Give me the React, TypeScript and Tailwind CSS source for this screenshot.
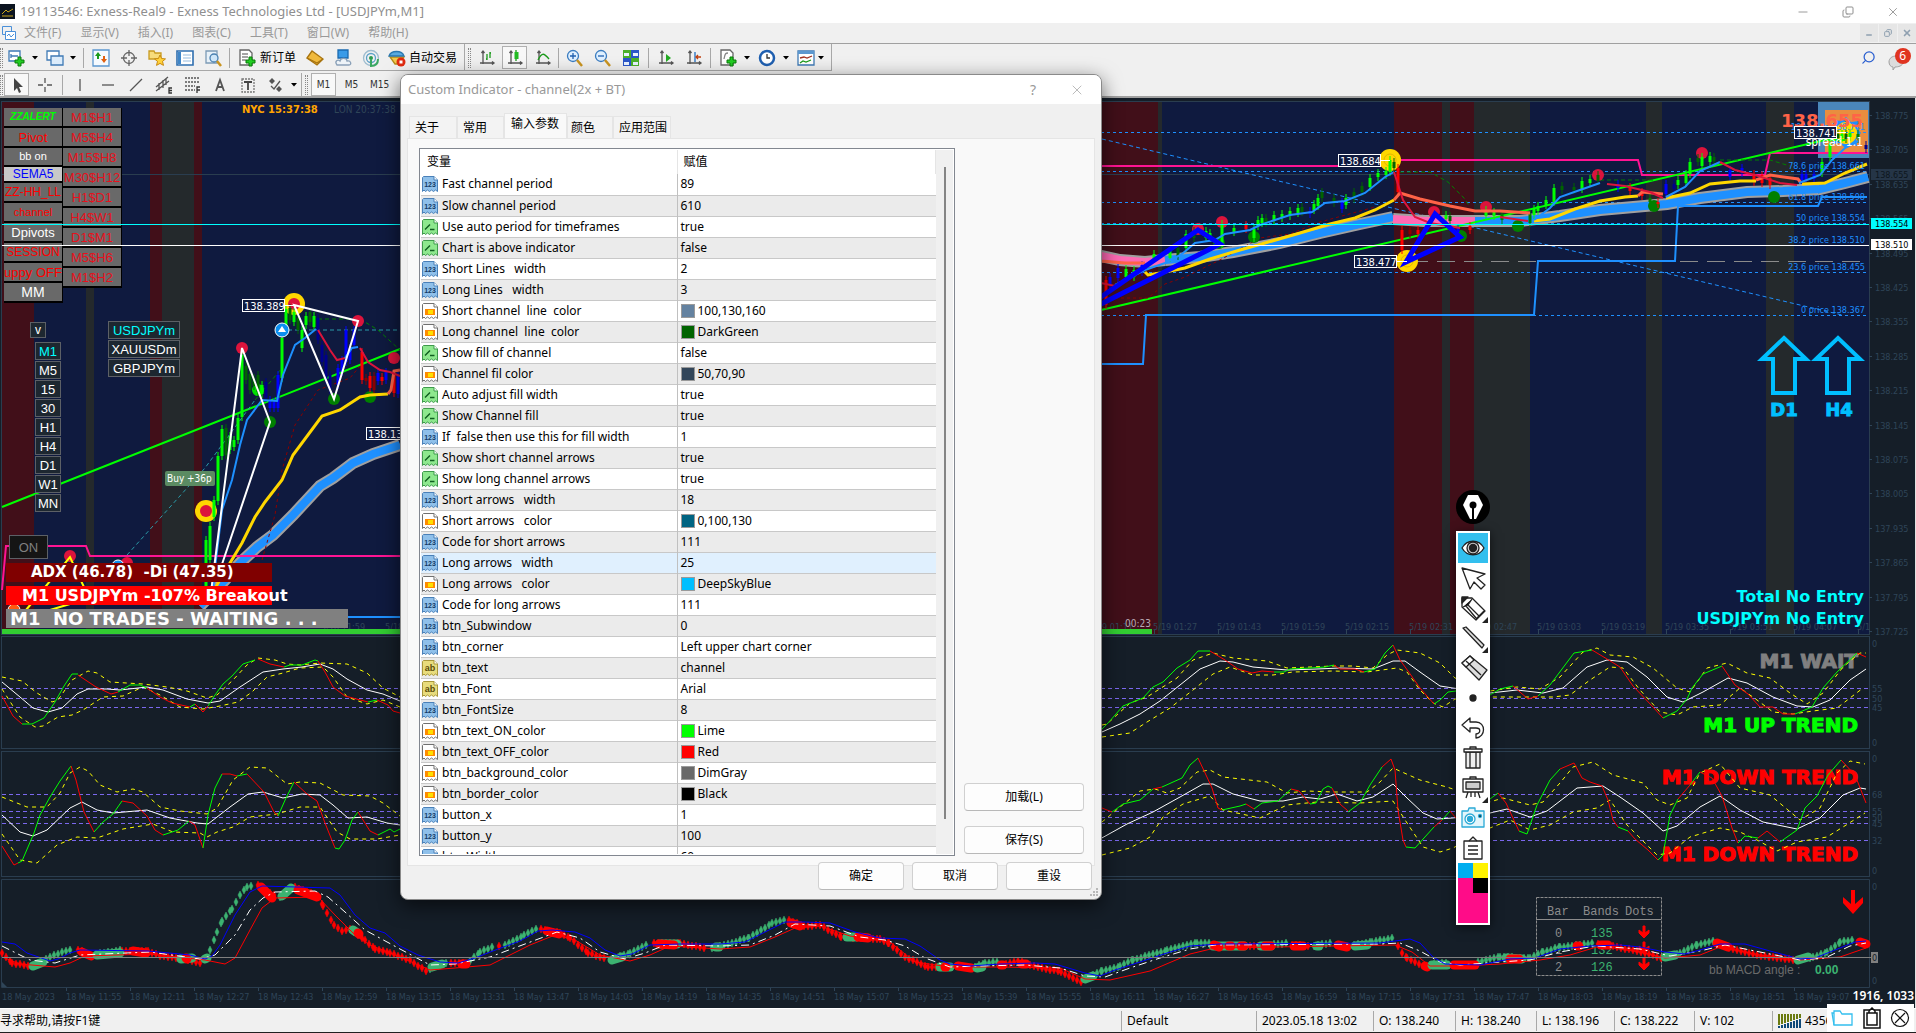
import React from 'react';
import { Search, Minus, X, Copy } from 'lucide-react';

const LIME = '#00ff00';
const RED = '#ff0000';
const BLUE = '#1e90ff';
const SEA = '#3cb371';
const GOLD = '#ffd700';
const CRIMSON = '#dc143c';
const TOMATO = '#ff6347';
const PINK = '#ff1493';
const FRAME = '#2a3d4f';
const DIM = '#2f4558';

const TAHOMA = '"DejaVu Sans Condensed", "DejaVu Sans", sans-serif';
const HEAVY = '"DejaVu Sans", sans-serif';

type Line = [string, string];

/* ---------- main chart data ---------- */

const bands: [number, number, string][] = [
  [2, 34, 'r'], [34, 86, 'n'], [86, 94, 'g'], [94, 150, 'n'], [150, 162, 'r'], [162, 194, 'g'],
  [194, 202, 'r'], [202, 1050, 'n'], [1050, 1158, 'r'], [1158, 1162, 'g'], [1162, 1394, 'n'],
  [1394, 1442, 'r'], [1442, 1450, 'g'], [1450, 1474, 'r'], [1474, 1530, 'g'], [1530, 1646, 'n'],
  [1646, 1662, 'g'], [1662, 1766, 'n'], [1766, 1794, 'g'], [1794, 1869, 'n'],
];
const bandFill: Record<string, string> = { r: '#410f19', n: '#0f1a3f', g: '#24292c' };

const thickBands: Line[] = [
  [BLUE, '200,606 225,580 240,563 257,547 273,535 293,515 320,486 333,478 353,463 373,454 400,445'],
  ['#ff69b4', '1080,252 1101,256 1120,260 1145,262 1165,260'],
  [BLUE, '1165,260 1200,257 1233,252 1280,243 1320,233 1360,224 1393,217'],
  ['#ff69b4', '1393,219 1425,221 1475,221'],
  [BLUE, '1475,221 1520,221 1560,216 1600,210 1667,204 1700,198 1747,192 1783,191 1820,189 1845,183 1868,177'],
];

const averages: Line[] = [
  [GOLD, '208,600 230,563 242,543 255,517 265,502 282,480 293,455 322,416 340,410 360,397 370,395 388,394'],
  [TOMATO, '388,394 391,390 394,371 400,370'],
  [TOMATO, '1090,259 1101,261 1125,263 1145,263'],
  [GOLD, '1145,272 1148,275 1160,273 1185,268 1210,259 1240,250 1265,243 1300,233 1330,224 1355,218 1375,210 1394,200'],
  [TOMATO, '1394,200 1400,193 1420,199 1450,206 1475,211 1500,211 1530,213'],
  [GOLD, '1534,221 1550,219 1575,209 1600,201 1625,197 1638,196'],
  [TOMATO, '1638,196 1642,192 1663,194'],
  [GOLD, '1666,198 1690,193 1710,184 1740,181 1756,181'],
  [TOMATO, '1756,180 1770,175 1798,179 1801,183'],
  [GOLD, '1802,184 1825,183 1845,173 1867,164'],
];

const fastAverages: Line[] = [
  [BLUE, '212,600 216,560 222,510 232,480 240,445 247,420 262,400 277,401 283,375 295,345 305,338 316,329'],
  [CRIMSON, '318,330 330,350 337,360 345,358'],
  [BLUE, '345,358 352,348 358,347'],
  [CRIMSON, '360,348 368,362 380,370 390,372 400,376'],
  [CRIMSON, '1101,283 1115,286'],
  [BLUE, '1115,285 1145,270 1165,263 1182,254 1195,243 1215,240 1225,234 1250,230 1260,225 1290,215 1312,212 1325,203 1345,201 1365,193 1385,177 1394,172'],
  [CRIMSON, '1394,172 1403,200 1415,217 1430,223 1460,228'],
  [CRIMSON, '1500,217 1528,221'],
  [BLUE, '1534,220 1550,208 1560,197 1580,190 1600,183'],
  [CRIMSON, '1607,184 1625,186 1650,192 1663,198'],
  [BLUE, '1666,197 1685,187 1700,171 1720,162'],
  [CRIMSON, '1720,162 1735,170 1755,175 1780,183 1797,185'],
  [BLUE, '1799,183 1820,175 1832,160 1845,148 1858,141'],
];

// x, top, bottom, colour
const candles: [number, number, number, string][] = [
  [206, 540, 600, LIME], [210, 526, 560, LIME], [214, 500, 517, LIME], [218, 456, 501, LIME], [222, 429, 456, LIME],
  [226, 428, 455, '#006400'], [230, 436, 450, LIME], [234, 440, 447, LIME], [238, 418, 440, LIME], [242, 355, 417, LIME],
  [246, 366, 380, '#006400'], [250, 374, 390, '#006400'], [254, 378, 386, '#006400'], [258, 375, 392, '#006400'],
  [262, 385, 394, LIME], [266, 382, 398, '#00008b'], [270, 400, 408, '#0000ff'], [274, 402, 408, '#0000ff'],
  [278, 375, 408, '#0000ff'], [282, 338, 378, LIME], [286, 309, 328, LIME], [290, 308, 320, '#006400'], [294, 312, 322, LIME],
  [298, 318, 330, '#006400'], [302, 330, 348, LIME], [306, 316, 325, LIME], [310, 312, 322, '#006400'], [314, 316, 327, LIME],
  [318, 318, 340, '#00008b'], [322, 345, 362, '#00008b'], [326, 355, 380, '#00008b'], [330, 375, 390, '#00008b'],
  [338, 368, 385, '#0000ff'], [342, 360, 372, '#0000ff'], [346, 330, 362, '#0000ff'], [350, 348, 360, '#0000ff'],
  [354, 330, 345, '#0000ff'], [362, 352, 380, RED], [366, 378, 381, '#8b0000'], [370, 376, 388, RED], [374, 376, 390, '#8b0000'],
  [378, 373, 381, '#0000ff'], [382, 377, 381, RED], [386, 372, 380, '#0000ff'], [394, 375, 393, RED], [398, 376, 394, '#0000ff'],
  [1106, 280, 305, RED], [1110, 277, 285, '#0000ff'], [1118, 268, 278, '#0000ff'], [1126, 269, 277, LIME], [1134, 270, 277, LIME],
  [1142, 265, 272, '#0000ff'], [1154, 254, 259, LIME], [1170, 251, 258, LIME], [1178, 248, 256, '#006400'], [1186, 234, 248, LIME],
  [1194, 231, 238, '#006400'], [1206, 231, 238, LIME], [1210, 233, 238, LIME], [1222, 224, 244, LIME], [1234, 228, 232, LIME],
  [1246, 225, 229, RED], [1254, 229, 238, LIME], [1258, 220, 226, LIME], [1262, 218, 223, LIME], [1266, 218, 223, '#006400'],
  [1274, 215, 221, LIME], [1282, 214, 218, LIME], [1290, 211, 216, LIME], [1298, 208, 213, LIME], [1302, 207, 212, '#006400'],
  [1310, 211, 214, '#0000ff'], [1314, 204, 210, LIME], [1318, 198, 206, LIME], [1322, 192, 198, '#006400'], [1334, 198, 203, '#006400'],
  [1342, 202, 209, '#0000ff'], [1346, 198, 205, LIME], [1354, 192, 199, '#006400'], [1362, 186, 192, '#006400'], [1370, 178, 187, LIME],
  [1378, 173, 177, LIME], [1386, 171, 175, LIME], [1390, 160, 172, LIME], [1394, 162, 168, '#006400'], [1398, 168, 192, RED],
  [1402, 230, 250, RED], [1410, 230, 234, '#8b0000'], [1418, 230, 234, RED], [1446, 215, 219, LIME], [1450, 216, 221, '#006400'],
  [1458, 228, 232, '#0000ff'], [1470, 226, 230, RED], [1486, 210, 216, LIME], [1494, 212, 216, LIME], [1502, 214, 220, '#008000'],
  [1530, 214, 223, '#008000'], [1534, 209, 215, LIME], [1538, 206, 211, LIME], [1546, 200, 205, LIME], [1554, 188, 202, LIME],
  [1562, 186, 190, '#006400'], [1574, 187, 190, '#006400'], [1582, 181, 189, LIME], [1590, 179, 183, LIME], [1598, 175, 181, '#006400'],
  [1618, 184, 188, '#0000ff'], [1630, 187, 191, RED], [1642, 192, 196, RED], [1650, 198, 202, '#008000'], [1658, 202, 204, RED],
  [1666, 184, 194, '#0000ff'], [1674, 184, 189, '#00008b'], [1678, 180, 185, LIME], [1686, 174, 183, LIME], [1690, 162, 174, LIME],
  [1698, 158, 162, '#006400'], [1702, 157, 166, LIME], [1710, 156, 162, LIME], [1714, 157, 161, '#006400'], [1730, 170, 177, '#0000ff'],
  [1742, 168, 173, '#0000ff'], [1754, 174, 182, RED], [1762, 175, 183, RED], [1770, 178, 185, RED], [1802, 174, 180, '#0000ff'],
  [1806, 174, 180, '#0000ff'], [1814, 174, 179, '#0000ff'], [1822, 162, 173, LIME], [1830, 144, 157, LIME], [1838, 134, 138, '#006400'],
  [1842, 134, 138, LIME], [1846, 134, 139, '#006400'], [1850, 133, 137, LIME], [1858, 134, 139, '#008000'], [1866, 145, 149, '#00008b'],
];

// x, y, colour
const dots: [number, number, string][] = [
  [242, 348, CRIMSON], [358, 321, CRIMSON], [394, 358, CRIMSON], [70, 556, CRIMSON], [127, 563, CRIMSON],
  [270, 422, '#008000'], [334, 399, '#008000'], [370, 397, '#008000'], [258, 390, '#00e000'],
  [1222, 222, CRIMSON], [1198, 229, CRIMSON], [1434, 212, CRIMSON], [1486, 207, CRIMSON], [1598, 175, CRIMSON], [1702, 153, CRIMSON],
  [1254, 237, '#008000'], [1219, 243, '#008000'], [1461, 236, '#008000'], [1518, 226, '#008000'], [1654, 206, '#008000'], [1774, 197, '#008000'],
];

const priceTags: [number, number, string][] = [
  [242, 299, '138.389'], [366, 427, '138.13'], [1338, 154, '138.684'], [1354, 255, '138.477'], [1794, 126, '138.741'],
];

const fibs: [number, string][] = [
  [130, '100 price 138.741'], [169, '78.6 price 138.661'], [200, '61.8 price 138.598'], [221, '50 price 138.554'],
  [243, '38.2 price 138.510'], [270, '23.6 price 138.455'], [313, '0 price 138.367'],
];

const clock = (start: number, i: number) => {
  const t = start + i * 16;
  return `${String(Math.floor(t / 60)).padStart(2, '0')}:${String(t % 60).padStart(2, '0')}`;
};

/* ---------- oscillator data ---------- */

const rsiFast: Line[] = [
  [RED, '2,696 13,716 22,724'], [LIME, '22,724 32,724 44,718 55,702 64,686 72,674 78,674'], [RED, '78,675 96,687 111,694 118,692'],
  [LIME, '118,692 130,685 140,685 147,688'], [RED, '147,688 160,697 172,703 190,707'], [LIME, '190,707 195,704'],
  [RED, '195,704 203,712 208,706'], [LIME, '208,706 215,695 223,684 232,676 243,664 255,660'], [RED, '258,659 270,664 284,667'],
  [LIME, '284,667 290,665 302,665 315,660 318,661'], [RED, '318,661 325,672 333,687 345,696 368,702'], [LIME, '368,702 377,700'],
  [RED, '377,700 388,705 393,711 400,713'],
  [LIME, '1102,729 1108,723 1123,706 1143,698 1153,687 1163,682 1177,668 1190,660 1198,651 1210,651'],
  [RED, '1210,651 1225,660 1238,669 1252,673 1262,671 1274,672'], [LIME, '1274,672 1284,672 1290,669 1310,668 1325,667 1334,665'],
  [RED, '1334,665 1340,669 1355,669 1364,672'], [LIME, '1364,672 1375,669 1385,653 1393,645'],
  [RED, '1393,645 1400,660 1408,671 1420,688 1434,704'], [LIME, '1434,704 1440,700 1448,692 1456,691 1490,695 1500,689 1513,686'],
  [RED, '1513,686 1528,699 1538,696'], [LIME, '1538,696 1550,685 1574,653 1592,650'],
  [RED, '1592,650 1607,659 1620,667 1633,686 1653,707 1663,718'], [LIME, '1663,718 1677,711 1687,699 1692,688 1703,674 1722,666'],
  [RED, '1722,666 1735,685 1748,694 1760,707 1773,707 1783,714 1795,714'], [LIME, '1795,714 1812,707 1823,688 1837,672 1857,653'],
  [RED, '1857,653 1866,657'],
];
const rsiSlow = [
  '2,682 20,697 33,708 48,712 62,708 77,694 88,689 107,689 120,690 147,687 163,690 187,699 208,703 220,701 240,687 263,672 283,669 302,667 320,664 333,669 347,679 367,690 383,694 400,701',
  '1102,732 1120,724 1140,714 1160,701 1180,685 1200,669 1220,661 1233,662 1253,667 1287,670 1317,669 1340,668 1373,669 1393,661 1405,661 1420,672 1440,686 1453,688 1490,693 1517,690 1543,693 1563,688 1587,667 1607,660 1627,662 1647,677 1667,697 1683,702 1703,692 1728,678 1747,683 1773,697 1797,706 1813,707 1830,700 1850,680 1866,669',
];
const rsiBands = [
  '2,677 22,681 37,693 52,702 58,700 72,680 88,671 97,673 110,682 143,684 167,687 187,691 207,698 217,695 233,680 247,665 258,658 275,660 287,664 300,665 320,663 347,664 367,673 383,688 400,697',
  '2,689 20,717 35,727 43,726 58,717 72,715 83,710 103,697 123,696 143,687 160,695 180,707 203,709 220,706 238,702 252,692 267,677 283,673 300,668 323,667 333,677 347,697 367,704 383,700 400,707',
  '1102,725 1107,724 1130,703 1147,697 1177,678 1193,660 1213,653 1233,658 1267,661 1287,668 1333,666 1353,666 1373,668 1387,655 1397,650 1420,653 1440,663 1455,678 1490,691 1517,687 1540,689 1560,677 1583,652 1597,648 1610,655 1633,657 1653,668 1677,688 1690,692 1707,668 1727,663 1747,673 1770,678 1790,693 1807,704 1823,693 1843,667 1860,653 1866,653',
  '1102,737 1130,733 1147,722 1170,708 1193,690 1213,674 1230,667 1253,675 1273,675 1293,672 1333,671 1367,672 1397,668 1407,672 1420,690 1433,703 1443,707 1455,699 1490,697 1530,697 1553,697 1570,695 1590,680 1610,667 1623,668 1640,690 1660,712 1677,715 1693,707 1720,705 1740,688 1757,700 1773,712 1793,714 1813,711 1837,708 1863,688',
];

const stoFast: Line[] = [
  [RED, '2,846 14,865 18,863'], [LIME, '18,863 22,861 34,833 40,815 50,797 60,781 71,766'], [RED, '71,766 76,780 84,812 94,832'],
  [LIME, '94,832 103,822 113,814 122,801'], [RED, '122,801 133,803 147,816 155,830 163,835'], [LIME, '163,835 178,830 189,821'],
  [RED, '189,821 195,825 203,848'], [LIME, '203,848 208,815 215,788 222,774'], [RED, '222,774 230,774 237,776'],
  [LIME, '237,776 247,774'], [RED, '247,774 264,792 274,812 278,816'], [LIME, '278,816 286,798 294,782'],
  [RED, '294,782 307,794 317,801 325,823 335,848'], [LIME, '335,848 339,849 345,840 352,820 358,812'], [RED, '358,812 370,831 378,835'],
  [LIME, '378,835 390,829 394,832 400,829'],
  [RED, '1102,808 1112,812'], [LIME, '1112,812 1123,804 1140,800 1153,789'], [RED, '1153,789 1162,787'],
  [LIME, '1162,787 1182,778 1190,765 1198,758'], [RED, '1198,758 1206,775 1212,788 1218,808 1222,810'], [LIME, '1222,810 1240,806 1246,804'],
  [RED, '1246,804 1254,809'], [LIME, '1254,809 1262,803 1278,801 1291,789'], [RED, '1291,789 1299,791 1310,804'],
  [LIME, '1310,804 1316,803 1323,789 1328,786 1332,788'], [RED, '1332,788 1340,804 1348,811'], [LIME, '1348,812 1360,803 1370,785 1382,767'],
  [RED, '1382,767 1391,759 1395,770 1398,810 1403,840 1406,847'], [LIME, '1406,847 1415,848 1424,838 1434,827'],
  [RED, '1434,827 1442,820'], [LIME, '1442,820 1450,811'], [RED, '1450,811 1456,818'], [LIME, '1490,799 1498,793'],
  [RED, '1498,793 1506,803 1519,831'], [LIME, '1519,831 1527,834 1537,805 1550,780 1560,769'],
  [RED, '1560,769 1574,763 1582,778 1590,782 1602,786 1608,800 1613,820 1618,827'], [LIME, '1618,827 1628,831'],
  [RED, '1628,831 1635,839 1648,850 1658,860'], [LIME, '1658,860 1663,855 1670,815 1678,799'], [RED, '1678,799 1690,785'],
  [LIME, '1690,785 1700,772'], [RED, '1700,772 1712,778 1722,796 1732,828 1738,843'], [LIME, '1738,843 1745,836 1758,838'],
  [RED, '1758,838 1767,831 1780,842'], [LIME, '1780,842 1797,830 1805,808 1817,796 1828,775 1841,760'], [RED, '1841,760 1855,775 1866,803'],
];
const stoSlow = [
  '2,815 20,832 33,836 47,830 70,808 82,802 97,810 113,813 147,810 170,818 197,823 208,824 230,807 248,794 263,792 283,798 302,794 320,795 333,805 348,818 367,817 387,823 400,825',
  '1100,839 1127,824 1153,812 1180,797 1203,784 1213,784 1233,794 1260,801 1283,801 1303,797 1320,799 1337,794 1357,801 1373,797 1393,784 1407,798 1423,813 1437,819 1453,818 1490,813 1507,809 1530,817 1547,811 1577,788 1603,786 1620,797 1643,813 1663,831 1677,826 1700,807 1720,796 1740,810 1763,822 1797,829 1820,818 1843,795 1860,788 1866,789',
];
const stoBands = [
  '2,797 27,807 47,807 60,793 70,773 80,767 88,771 100,785 117,792 133,789 143,792 160,807 180,811 207,814 217,808 233,780 250,767 267,768 287,784 300,782 320,783 343,795 370,796 383,803 400,816',
  '2,834 20,860 37,863 57,845 77,837 97,838 123,829 153,824 173,832 200,833 207,837 217,832 233,827 250,817 277,814 300,807 320,807 337,832 350,839 377,839 400,835',
  '1102,822 1120,807 1140,791 1155,789 1167,793 1180,788 1197,772 1210,770 1223,777 1267,782 1287,793 1307,791 1333,792 1367,792 1380,782 1393,768 1420,780 1447,787 1490,802 1503,798 1530,805 1543,802 1560,783 1573,767 1593,762 1613,775 1643,783 1657,800 1670,805 1687,798 1700,773 1720,764 1740,788 1770,795 1800,820 1820,808 1837,773 1850,761 1865,764',
  '1102,855 1130,848 1150,837 1163,817 1183,804 1210,796 1223,810 1260,818 1287,805 1317,802 1360,803 1393,801 1407,823 1423,847 1440,852 1453,848 1490,828 1510,820 1530,830 1550,825 1573,812 1597,808 1610,800 1627,825 1657,855 1670,853 1690,837 1720,828 1740,832 1757,840 1777,851 1797,842 1827,837 1843,827 1865,813',
];

/* ---------- MACD data ---------- */

// colour, then corner points of the run of diamonds
const macdRuns: [string, [number, number][]][] = [
  [RED, [[2, 953], [12, 963], [30, 966]]], [SEA, [[34, 965], [50, 957], [62, 952], [74, 949]]], [RED, [[78, 950], [90, 954]]],
  [SEA, [[96, 954], [122, 950]]], [RED, [[122, 951], [148, 951], [160, 956], [180, 958], [202, 963]]],
  [SEA, [[206, 958], [210, 950], [217, 932], [222, 921], [232, 909], [240, 895], [247, 887], [255, 885]]],
  [RED, [[258, 885], [278, 898]]], [SEA, [[280, 897], [292, 886]]],
  [RED, [[295, 887], [318, 896], [323, 906], [334, 925], [342, 931], [350, 929], [365, 940], [375, 949], [390, 953], [410, 960], [427, 972]]],
  [SEA, [[430, 969], [448, 962]]], [RED, [[451, 963], [466, 963]]], [SEA, [[470, 961], [480, 952], [496, 945]]], [RED, [[499, 946], [503, 948]]],
  [SEA, [[505, 945], [524, 935], [538, 928]]], [RED, [[541, 929], [560, 933], [570, 938], [588, 953], [607, 959]]],
  [SEA, [[612, 959], [630, 953], [650, 943]]], [RED, [[654, 943], [680, 943], [708, 949]]], [SEA, [[712, 948], [749, 938], [772, 923], [786, 919]]],
  [RED, [[789, 920], [804, 926], [820, 925], [841, 937], [880, 939], [889, 943], [905, 957], [928, 967], [945, 967]]],
  [SEA, [[975, 967], [985, 963], [1000, 962]]], [RED, [[1002, 965], [1018, 961], [1034, 966], [1061, 972], [1082, 982]]],
  [SEA, [[1085, 979], [1102, 971], [1120, 966], [1133, 960], [1167, 950], [1197, 943], [1212, 943]]], [RED, [[1214, 946], [1260, 946]]],
  [SEA, [[1274, 944], [1290, 943]]], [RED, [[1292, 945], [1312, 946]]], [SEA, [[1314, 946], [1334, 942]]],
  [SEA, [[1354, 945], [1372, 942], [1393, 938]]], [RED, [[1398, 946], [1402, 953], [1407, 958], [1420, 964]]],
  [SEA, [[1430, 965], [1450, 962]]], [SEA, [[1478, 962], [1500, 957], [1530, 958], [1543, 952], [1560, 947], [1595, 943]]],
  [RED, [[1598, 944], [1613, 946], [1637, 951], [1662, 958]]], [SEA, [[1665, 957], [1680, 953], [1697, 945], [1715, 941]]],
  [RED, [[1717, 943], [1733, 949], [1757, 955], [1795, 960]]], [SEA, [[1798, 960], [1813, 957], [1827, 952], [1840, 942], [1855, 940]]],
];

const macdBlobs: Line[] = [
  [SEA, '33,966 43,962'], [RED, '82,952 91,956'], [SEA, '97,955 120,953'], [RED, '133,951 146,953'], [SEA, '181,959 192,958'],
  [RED, '186,958 187,959'], [SEA, '205,959 207,958'], [RED, '261,887 272,898'], [SEA, '282,896 291,888'], [RED, '298,890 317,897'],
  [SEA, '353,930 356,932'], [RED, '358,933 359,934'], [SEA, '432,967 442,964'], [RED, '462,964 466,964'], [RED, '547,931 559,934'],
  [SEA, '612,960 622,957'], [SEA, '660,944 677,944'], [RED, '659,944 674,945'], [SEA, '716,947 719,947'], [RED, '791,923 800,926'],
  [SEA, '847,937 855,937'], [RED, '858,937 868,938'], [SEA, '940,967 950,967'], [RED, '945,967 946,967'], [RED, '958,966 971,968'],
  [SEA, '977,968 982,967'], [RED, '1001,965 1003,965'], [RED, '1022,964 1026,964'], [SEA, '1085,979 1093,976'],
  [SEA, '1213,946 1244,946'], [RED, '1214,945 1219,947'], [RED, '1229,946 1231,946'], [RED, '1241,946 1244,946'],
  [SEA, '1261,946 1271,946'], [RED, '1265,946 1271,946'], [RED, '1294,946 1303,946'], [SEA, '1317,946 1319,946'],
  [RED, '1338,945 1347,947'], [SEA, '1355,946 1367,945'], [RED, '1425,966 1427,967'], [SEA, '1432,965 1447,965'],
  [RED, '1454,965 1475,965'], [SEA, '1506,958 1522,959'], [RED, '1510,959 1519,959'], [RED, '1577,946 1579,946'],
  [RED, '1601,945 1608,945'], [SEA, '1665,957 1675,955'], [RED, '1717,943 1728,947'], [SEA, '1798,960 1808,957'], [RED, '1860,942 1866,944'],
];

const macdUpper =
  '2,942 15,944 27,953 50,961 58,959 70,953 80,950 148,951 190,955 205,959 212,956 220,945 235,915 250,892 262,886 330,888 340,895 355,915 370,928 385,933 400,946 418,955 440,962 458,963 475,958 498,949 520,941 538,931 552,930 575,932 590,938 605,950 620,956 632,954 650,945 680,944 720,944 745,942 765,932 785,922 805,922 830,923 855,932 880,938 905,939 920,946 940,960 950,964 970,966 1000,964 1035,963 1055,964 1085,973 1100,976 1115,970 1140,962 1167,953 1190,946 1220,944 1380,943 1395,941 1410,939 1420,943 1433,957 1445,964 1480,965 1510,959 1535,958 1560,949 1590,946 1620,945 1640,947 1665,952 1685,954 1700,950 1720,944 1745,944 1770,951 1800,959 1815,958 1835,950 1855,942 1866,941';
const macdMiddle =
  '2,946 30,960 55,963 80,955 150,952 200,959 215,955 235,935 250,910 263,898 275,892 315,891 328,897 345,912 365,930 400,949 430,965 455,964 490,957 525,944 557,932 580,938 600,952 625,959 645,953 665,945 720,946 750,945 775,935 795,924 830,926 860,937 885,940 905,946 925,958 950,967 980,966 1025,965 1060,968 1085,976 1105,977 1130,968 1160,958 1190,949 1215,945 1380,944 1400,943 1420,951 1440,962 1460,965 1500,962 1530,960 1560,952 1595,946 1640,949 1670,956 1700,951 1725,945 1760,952 1800,960 1825,958 1850,946 1866,943';
const macdLower =
  '2,957 20,964 55,967 70,963 85,956 150,954 205,960 225,964 235,958 250,930 262,908 275,898 318,897 335,915 355,935 370,945 400,957 430,970 455,968 490,965 510,955 530,945 555,935 575,940 600,955 630,961 650,955 670,946 720,949 750,947 775,937 795,928 820,926 850,936 890,942 915,962 950,967 1000,967 1060,968 1085,979 1110,980 1150,971 1190,954 1215,948 1395,945 1412,952 1430,966 1460,966 1500,964 1540,960 1570,955 1600,946 1640,952 1665,958 1700,955 1720,947 1760,955 1800,960 1840,957 1866,948';

// one diamond every 4px along a run
function diamonds(points: [number, number][]) {
  const out: string[] = [];
  for (let i = 0; i < points.length - 1; i++) {
    const [x1, y1] = points[i];
    const [x2, y2] = points[i + 1];
    for (let x = x1; x < x2; x += 4) {
      const y = Math.round(y1 + ((y2 - y1) * (x - x1)) / (x2 - x1));
      out.push(`M${x} ${y - 4}l2 4l-2 4l-2 -4z`);
    }
  }
  return out.join('');
}

/* ---------- chart panes ---------- */

function Lines({ data, width }: { data: Line[]; width: number }) {
  return (
    <>
      {data.map(([c, p], i) => (
        <polyline key={i} points={p} stroke={c} strokeWidth={width} fill="none" />
      ))}
    </>
  );
}

function MainChart() {
  return (
    <svg viewBox="0 98 1916 537" className="block w-full h-auto" fontFamily={TAHOMA} fontSize="9">
      <rect x="1.5" y="101.5" width="1868" height="533" fill="none" stroke={FRAME} />
      {bands.map(([a, b, c]) => (
        <rect key={a} x={a} y="102" width={b - a} height="532" fill={bandFill[c]} />
      ))}
      <path d="M2 174.5H1869" stroke={FRAME} />

      <rect x="1818" y="102" width="51" height="56" fill="#4a86bb" />
      <rect x="1825" y="110" width="43" height="43" fill="#e98d3f" />
      <path d="M1846 117l5 5l8 -1l-2 7l4 5l-5 5l1 8l-7 -2l-5 4l-5 -5l-8 1l2 -7l-4 -5l5 -5l-1 -7l7 1z" fill={BLUE} />
      <circle cx="1846" cy="133" r="11" fill={GOLD} />

      {/* session times */}
      <g fill={DIM}>
        <text x="321" y="630">5/18 11:59</text>
        <text x="385" y="630">5/18 12:15</text>
        {Array.from({ length: 12 }, (_, i) => (
          <text key={i} x={1089 + i * 64} y="630">5/19 {clock(71, i)}</text>
        ))}
        <text x="1857" y="630">5/1</text>
        <text x="334" y="113" fontSize="10">LON 20:37:38</text>
      </g>
      <path d="M1154.5 629v5M1218.5 629v5M1282.5 629v5M1346.5 629v5M1410.5 629v5M1538.5 629v5M1602.5 629v5M1666.5 629v5M1730.5 629v5M1794.5 629v5M1858.5 629v5" stroke={DIM} />
      <rect x="2" y="629" width="1150" height="5" fill="#32cd32" />
      <text x="1125" y="627" fontSize="10" fill="#b9a9b4">00:23</text>

      {/* fibonacci levels */}
      <g stroke={BLUE} strokeDasharray="3 3">
        <path d="M1101 132.5H1867M1101 171.5H1867M1101 202.5H1867M1101 223.5H1867M1101 272.5H1867M1101 315.5H1867" />
        <path d="M1102 139L1842 315" strokeDasharray="4 3" />
      </g>
      <path d="M1410 261.5H1868" stroke="#8b8b8b" strokeDasharray="18 9" />

      <Lines data={thickBands.map(([, p]): Line => ['#a0a0a0', p])} width={12} />
      <Lines data={thickBands} width={8} />
      <path d="M2 590L6 546H86L90 556H400M1101 166H1394L1398 160H1638L1642 175H1765L1770 153H1868" stroke={PINK} strokeWidth="2" fill="none" />
      <path d="M1101 364H1143L1146 315H1534L1538 261H1675L1678 206H1818L1822 197H1867M340 617H400" stroke={BLUE} strokeWidth="2" fill="none" />
      <path d="M2 507L400 349M1101 310L1825 140H1845" stroke={LIME} strokeWidth="2" fill="none" />

      <path d="M127 555L205 468L255 400M288 330H400" stroke="#2a9aa8" strokeDasharray="4 3" fill="none" />
      <path d="M318 319H360L378 330L400 350M1400 172L1430 172L1448 182L1464 198L1470 207M1600 180H1655M1720 160H1770L1790 166M255 400L282 368" stroke="#008000" strokeDasharray="4 3" fill="none" />
      <path d="M262 560L275 515L282 470L295 425L318 390L350 378L360 366M1115 298H1148L1165 284L1185 277L1220 260L1260 238L1290 234L1320 222L1375 207" stroke="#8b0000" strokeDasharray="3 3" fill="none" />

      {dots.map(([x, y, c], i) => (
        <circle key={i} cx={x} cy={y} r="6" fill={c} />
      ))}
      {[[294, 304], [206, 511], [1390, 160], [1407, 261]].map(([x, y]) => (
        <circle key={x} cx={x} cy={y} r="11" fill={GOLD} />
      ))}
      <circle cx="294" cy="304" r="6" fill={CRIMSON} />
      <circle cx="206" cy="511" r="6" fill={CRIMSON} />
      <g fill="none" stroke="#e0b800">
        <circle cx="1390" cy="160" r="6" />
        <circle cx="1407" cy="261" r="6" />
      </g>

      {candles.map(([x, t, b, c]) => (
        <path key={x} d={`M${x} ${t - 4}V${b + 4}`} stroke={c} />
      ))}
      {candles.map(([x, t, b, c]) => (
        <rect key={x} x={x - 1.5} y={t} width="3" height={b - t} fill={c} />
      ))}

      <Lines data={averages} width={3} />
      <Lines data={fastAverages} width={2} />
      <path d="M210 600L242 348L270 422L216 582M294 305L358 321L334 399Z" stroke="#fff" strokeWidth="2" fill="none" />
      <path d="M26 610L70 557L90 600M50 610L70 604" stroke="#ffff00" strokeWidth="2" fill="none" />
      <path d="M1101 297L1198 230L1220 244L1101 304M1435 214L1406 262L1460 237Z" stroke="#0000ff" strokeWidth="5" fill="none" />
      <path d="M2 224.5H1869" stroke="#00ffff" />
      <path d="M2 245.5H1869" stroke="#fff" />

      <circle cx="282" cy="330" r="7" fill="#0c8ff0" stroke="#fff" />
      <path d="M282 326l4 6h-8z" fill="#fff" />
      <circle cx="118" cy="566" r="6" fill="#0c8ff0" stroke="#fff" />
      <circle cx="14" cy="610" r="6" fill="#ff5a10" stroke="#fff" />

      <rect x="165" y="471" width="50" height="15" rx="2" fill="#5b8b62" />
      <text x="167" y="482" fontSize="10" fill="#fff">Buy +36p</text>

      {fibs.map(([y, t]) => (
        <text key={t} x="1865" y={y} textAnchor="end" fill={BLUE}>{t}</text>
      ))}
      <text x="1863" y="127" textAnchor="end" fontFamily={HEAVY} fontWeight="700" fontSize="18" fill={TOMATO}>138.655</text>
      {priceTags.map(([x, y, t]) => (
        <g key={t}>
          <rect x={x + 0.5} y={y + 0.5} width="42" height="12" fill="#0f1a3f" stroke="#fff" />
          <text x={x + 2} y={y + 11} fontSize="11" fill="#fff">{t}</text>
        </g>
      ))}
      <path d="M284 305.5H294M1381 160.5H1390M1397 261.5H1407M1837 132.5H1846" stroke="#fff" />
      <text x="1863" y="146" textAnchor="end" fontSize="12" fill="#fff">spread 1.1</text>
      <text x="242" y="113" fontSize="10" fontWeight="700" fill="#ffa500" fontFamily={HEAVY}>NYC 15:37:38</text>

      {/* trend arrows */}
      <g fill="none" stroke="#00bfff" strokeWidth="4">
        <path d="M1784 338L1806 359H1795V393H1773V359H1762Z" />
        <path d="M1838 338L1860 359H1849V393H1827V359H1816Z" />
      </g>
      <g fontFamily={HEAVY} fontWeight="700">
        <g fill="#00bfff" stroke="#00bfff" fontSize="18" textAnchor="middle">
          <text x="1784" y="416">D1</text>
          <text x="1839" y="416">H4</text>
        </g>
        <g fill="#00ffff" fontSize="16" textAnchor="end">
          <text x="1864" y="602">Total No Entry</text>
          <text x="1864" y="624">USDJPYm No Entry</text>
        </g>
      </g>

      {/* price scale */}
      {Array.from({ length: 16 }, (_, i) => (
        <g key={i}>
          <path d={`M1869 ${Math.round(115 + i * 34.4) + 0.5}h3`} stroke={DIM} />
          <text x="1875" y={Math.round(119 + i * 34.4)} fill={DIM}>{(138.775 - i * 0.07).toFixed(3)}</text>
        </g>
      ))}
      <rect x="1871" y="169" width="41" height="11" fill="#253547" />
      <rect x="1871" y="218" width="41" height="11" fill="#00ffff" />
      <rect x="1871" y="239" width="41" height="11" fill="#fff" />
      <text x="1875" y="178" fill="#0d151d">138.655</text>
      <text x="1875" y="227">138.554</text>
      <text x="1875" y="248">138.510</text>
    </svg>
  );
}

interface PaneProps {
  top: number;
  height: number;
  levels: number[];
  fast: Line[];
  slow: string[];
  envelope: string[];
  scale: [number, string][];
  signals: [number, string, string][];
}

function OscillatorPane({ top, height, levels, fast, slow, envelope, scale, signals }: PaneProps) {
  return (
    <svg viewBox={`0 ${top} 1916 ${height}`} className="block w-full h-auto" fontFamily={TAHOMA} fontSize="9">
      <rect x="1.5" y={top + 1.5} width="1868" height={height - 3} fill="none" stroke={FRAME} />
      {signals.map(([y, t, c]) => (
        <text key={y} x="1858" y={y} textAnchor="end" fontFamily={HEAVY} fontWeight="700" fontSize="20" fill={c} stroke={c}>{t}</text>
      ))}
      {levels.map(y => (
        <path key={y} d={`M2 ${y + 0.5}H1869`} stroke="#7b68ee" strokeDasharray="4 3" />
      ))}
      {envelope.map((p, i) => (
        <polyline key={i} points={p} stroke="#ffff00" strokeDasharray="4 4" fill="none" />
      ))}
      {slow.map((p, i) => (
        <polyline key={i} points={p} stroke="#fff" fill="none" />
      ))}
      <Lines data={fast} width={1} />
      {scale.map(([y, t]) => (
        <text key={y} x="1872" y={y} fill={DIM}>{t}</text>
      ))}
    </svg>
  );
}

const downArrow = (x: number, y: number) => `M${x - 1} ${y}h2v7l4 -3v3l-5 5l-5 -5v-3l4 3z`;

function MacdPane() {
  return (
    <svg viewBox="0 878 1916 110" className="block w-full h-auto" fontFamily={TAHOMA} fontSize="9">
      <path d="M1869.5 987.5H1.5V879.5H1869.5V987.5" fill="none" stroke={FRAME} />
      <path d="M2 982l5 5h-5z" fill={DIM} />

      <g stroke="#8c8c8c" fill="none">
        <rect x="1536.5" y="897.5" width="125" height="78" strokeDasharray="3 1" />
        <path d="M1536 919.5H1661" />
      </g>
      <g fontFamily='"Liberation Mono", monospace' fontSize="12">
        <g fill="#8c8c8c">
          <text x="1547" y="915">Bar</text>
          <text x="1583" y="915">Bands</text>
          <text x="1625" y="915">Dots</text>
          <text x="1555" y="937">0</text>
          <text x="1555" y="954">1</text>
          <text x="1555" y="971">2</text>
        </g>
        <g fill={SEA}>
          <text x="1591" y="937">135</text>
          <text x="1591" y="954">132</text>
          <text x="1591" y="971">126</text>
        </g>
      </g>
      <path d={downArrow(1644, 926) + downArrow(1644, 942) + downArrow(1644, 958)} fill={RED} stroke={RED} />
      <path d="M1851 890h4v14l8 -7v6l-10 11l-10 -11v-6l8 7z" fill={RED} />
      <text x="1709" y="974" fontSize="12" fontFamily='"Liberation Sans", sans-serif' fill="#6b6b6b">bb MACD angle :</text>
      <text x="1815" y="974" fontSize="12" fontWeight="700" fontFamily='"Liberation Sans", sans-serif' fill={SEA}>0.00</text>

      {macdRuns.map(([c, p], i) => (
        <path key={i} d={diamonds(p)} fill={c} stroke={c} strokeWidth="0.5" />
      ))}
      {macdBlobs.map(([c, p], i) => (
        <polyline key={i} points={p} stroke={c} strokeWidth="9" strokeLinecap="round" fill="none" />
      ))}
      <polyline points={macdLower} stroke={RED} fill="none" />
      <polyline points={macdMiddle} stroke="#fff" strokeDasharray="8 4 2 4" fill="none" />
      <polyline points={macdUpper} stroke="#0000ff" fill="none" />
      <path d="M2 957.5H1871" stroke="#808080" />

      <text x="1872" y="890" fill={DIM}>0</text>
      <rect x="1871" y="952" width="7" height="11" fill="#808080" />
      <text x="1872" y="961" fill="#151e28">0</text>
      <text x="1872" y="984" fill={DIM}>0</text>
    </svg>
  );
}

function TimeScale() {
  return (
    <svg viewBox="0 988 1916 20" className="block w-full h-auto" fontFamily={TAHOMA} fontSize="9" fill={DIM}>
      <text x="2" y="1000">18 May 2023</text>
      {Array.from({ length: 29 }, (_, i) => (
        <g key={i}>
          <path d={`M${66 + i * 64}.5 988v3`} stroke={DIM} />
          <text x={66 + i * 64} y="1000">18 May {clock(715, i)}</text>
        </g>
      ))}
    </svg>
  );
}

/* ---------- chart overlays ---------- */

const leftButtons: [string, string][] = [
  ['ZZALERT', 'h-5 bg-[#696969] text-[#00ff00] font-black italic text-[10px]'],
  ['Pivot', 'h-5 bg-[#696969] text-[#ff0000] text-[13px]'],
  ['bb on', 'h-[19px] bg-[#696969] text-white text-[11px]'],
  ['SEMA5', 'h-4 bg-[#c8c8c8] text-[#0000ff] text-[12px]'],
  ['ZZ-HH_LL', 'h-5 bg-[#696969] text-[#ff0000] text-[12px]'],
  ['channel', 'h-5 bg-[#696969] text-[#ff0000] text-[11px]'],
  ['Dpivots', 'h-5 bg-[#696969] text-white text-[13px]'],
  ['SESSION', 'h-5 bg-[#696969] text-[#ff0000] text-[12px]'],
  ['uppy OFF', 'h-5 bg-[#696969] text-[#ff0000] text-[13px]'],
  ['MM', 'h-5 bg-[#696969] text-white text-[14px]'],
];
const pairs = ['M1$H1', 'M5$H4', 'M15$H8', 'M30$H12', 'H1$D1', 'H4$W1', 'D1$M1', 'M5$H6', 'M1$H2'];
const frames = ['M1', 'M5', '15', '30', 'H1', 'H4', 'D1', 'W1', 'MN'];
const symbols = ['USDJPYm', 'XAUUSDm', 'GBPJPYm'];

function ChartButtons() {
  return (
    <div className="font-['Liberation_Sans',sans-serif]">
      <div className="absolute left-1 top-[10px] flex leading-none">
        <div className="flex flex-col w-[59px]">
          {leftButtons.map(([label, look]) => (
            <button key={label} className={`overflow-hidden whitespace-nowrap border-b-2 border-r border-black ${look}`}>{label}</button>
          ))}
        </div>
        <div className="flex flex-col w-[59px]">
          {pairs.map(p => (
            <button key={p} className="h-5 overflow-hidden whitespace-nowrap border-b-2 border-r border-black bg-[#696969] text-[#e8101c] text-[13px]">{p}</button>
          ))}
        </div>
      </div>
      {/* price lines run over the buttons */}
      <div className="absolute left-1 w-[118px] top-[126px] h-px bg-[#00ffff]" />
      <div className="absolute left-1 w-[118px] top-[147px] h-px bg-white" />

      <button className="absolute left-[30px] top-[224px] w-4 h-4 border border-[#5c6066] bg-[#1d2730] text-white text-xs leading-none">v</button>
      <div className="absolute left-[35px] top-[244px] flex flex-col gap-px w-[26px]">
        {frames.map((f, i) => (
          <button key={f} className={`h-[18px] border border-[#5c6066] bg-[#1d2730] text-[13px] leading-none ${i === 0 ? 'text-[#00ffff]' : 'text-white'}`}>{f}</button>
        ))}
      </div>
      <div className="absolute left-[108px] top-[223px] flex flex-col gap-px w-[72px]">
        {symbols.map((s, i) => (
          <button key={s} className={`h-[18px] border border-[#5c6066] bg-[#1d2730] text-[13px] leading-none ${i === 0 ? 'text-[#00ffff]' : 'text-white'}`}>{s}</button>
        ))}
      </div>
      <button className="absolute left-[9px] top-[437px] w-[39px] h-6 border border-[#5c6066] bg-[#151515] text-[#808080] text-[13px] leading-none">ON</button>

      <div className="absolute left-[6px] top-[465px] flex flex-col gap-1 font-bold text-white whitespace-pre font-['DejaVu_Sans',sans-serif]">
        <p className="w-[266px] h-[19px] pl-[25px] bg-[#800000] text-[15px] leading-[19px]">{'ADX (46.78)  -Di (47.35)'}</p>
        <p className="w-[266px] h-[19px] pl-4 bg-[#ff0000] text-base leading-[19px]">M1 USDJPYm -107% Breakout</p>
        <p className="w-[342px] h-[19px] pl-1 bg-[#808080] text-lg leading-[19px]">{'M1  NO TRADES - WAITING . . .'}</p>
      </div>
    </div>
  );
}

/* ---------- floating drawing palette ---------- */

const paletteIcons: { name: string; more?: boolean; art: React.ReactNode }[] = [
  { name: 'Show', art: <><path d="M4 15C9 6 21 6 26 15C21 24 9 24 4 15Z" fill="#fff" /><circle cx="15" cy="15" r="6" fill="#ccc" /><circle cx="15" cy="15" r="3.5" fill="#222" /></> },
  { name: 'Pointer', art: <path d="M4 5L27 11L19 15L27 22L23 26L16 19L12 26Z" fill="#fff" /> },
  { name: 'Pencil', more: true, art: <><path d="M4 14V5L14 5L27 18L18 27Z" fill="#fff" /><path d="M5 14L10 12L14 6M10 12L21 23M8 13L18 25M18 26L26 18" /><path d="M4 4h6l-6 6z" fill="#222" /></> },
  { name: 'Line', more: true, art: <path d="M5 5L8 4L26 22L24 25Z" fill="#ddd" /> },
  { name: 'Eraser', art: <><path d="M4 10L12 3L29 17L21 27Z" fill="#ddd" /><path d="M4 10L12 3L16 7L8 14Z" fill="#fff" /><path d="M8 8L23 22" fill="none" /></> },
  { name: 'Pen size', art: <circle cx="15" cy="15" r="3" fill="#222" /> },
  { name: 'Undo', art: <path d="M4 12L12 5V9H18C28 9 28 24 18 25V21C23 20 23 15 18 15H12V19Z" fill="#fff" /> },
  { name: 'Clear', art: <><path d="M8 9H22V25H8Z" fill="#eee" /><path d="M6 6H24V9H6ZM12 6V4H18V6M12 9V25M18 9V25" fill="#fff" /></> },
  { name: 'Board', more: true, art: <><path d="M5 6H25V19H5Z" fill="#fff" /><path d="M8 9H22V16H8Z" fill="#ccc" /><path d="M12 6V4H18V6M10 19L8 25M13 19V24M17 19V24M20 19L22 25" fill="none" /></> },
  { name: 'Screenshot', art: <g stroke="#2aa9d6"><path d="M4 8H10L11 5H17V8H26V24H4Z" fill="#e2f5fb" /><circle cx="12" cy="16" r="5" fill="#fff" /><circle cx="12" cy="16" r="2.5" fill="#2aa9d6" /><circle cx="22" cy="13" r="1.5" /></g> },
  { name: 'Paste', art: <><path d="M6 8H24V26H6Z" fill="#fff" /><path d="M11 8L15 4L19 8M10 13H20M10 17H20M10 21H20" fill="none" /></> },
];

function Palette() {
  return (
    <div className="absolute left-[76%] top-[392px] flex flex-col items-center gap-[7px]">
      <button aria-label="Toggle drawing" className="w-[34px] h-[34px] rounded-full bg-black">
        <svg viewBox="0 0 34 34" className="block">
          <path d="M12 5H22L27 15L20 29H14L7 15Z" fill="#fff" />
          <circle cx="17" cy="15" r="3.5" fill="#000" />
          <path d="M17 15V29" stroke="#000" strokeWidth="2" />
        </svg>
      </button>
      <div className="border-2 border-white bg-white shadow-[0_2px_10px_rgba(0,0,0,0.6)]">
        {paletteIcons.map((p, i) => (
          <button key={p.name} aria-label={p.name} className={`block w-[30px] h-[30px] ${i === 0 ? 'bg-[#33bfee]' : 'bg-white'}`}>
            <svg viewBox="0 0 30 30" className="block" stroke="#222" strokeWidth="1.3" strokeLinejoin="round">
              {p.art}
              {p.more && <path d="M30 24V30H24Z" fill="#222" stroke="none" />}
            </svg>
          </button>
        ))}
        <div className="grid grid-cols-2 w-[30px] h-[60px] grid-rows-4 bg-[#ff0c88]">
          <span className="bg-[#00aeef]" />
          <span className="bg-[#fff200]" />
          <span className="bg-[#ff0c88]" />
          <span className="bg-black" />
        </div>
      </div>
    </div>
  );
}

/* ---------- dialog ---------- */

type Kind = 'int' | 'bool' | 'color' | 'text';
interface Param { kind: Kind; name: string; value: string; swatch?: string }

const params: Param[] = [
  { kind: 'int', name: 'Fast channel period', value: '89' },
  { kind: 'int', name: 'Slow channel period', value: '610' },
  { kind: 'bool', name: 'Use auto period for timeframes', value: 'true' },
  { kind: 'bool', name: 'Chart is above indicator', value: 'false' },
  { kind: 'int', name: 'Short Lines   width', value: '2' },
  { kind: 'int', name: 'Long Lines   width', value: '3' },
  { kind: 'color', name: 'Short channel  line  color', value: '100,130,160', swatch: 'bg-[#6482a0]' },
  { kind: 'color', name: 'Long channel  line  color', value: 'DarkGreen', swatch: 'bg-[#006400]' },
  { kind: 'bool', name: 'Show fill of channel', value: 'false' },
  { kind: 'color', name: 'Channel fil color', value: '50,70,90', swatch: 'bg-[#32465a]' },
  { kind: 'bool', name: 'Auto adjust fill width', value: 'true' },
  { kind: 'bool', name: 'Show Channel fill', value: 'true' },
  { kind: 'int', name: 'If  false then use this for fill width', value: '1' },
  { kind: 'bool', name: 'Show short channel arrows', value: 'true' },
  { kind: 'bool', name: 'Show long channel arrows', value: 'true' },
  { kind: 'int', name: 'Short arrows   width', value: '18' },
  { kind: 'color', name: 'Short arrows   color', value: '0,100,130', swatch: 'bg-[#006482]' },
  { kind: 'int', name: 'Code for short arrows', value: '111' },
  { kind: 'int', name: 'Long arrows   width', value: '25' },
  { kind: 'color', name: 'Long arrows   color', value: 'DeepSkyBlue', swatch: 'bg-[#00bfff]' },
  { kind: 'int', name: 'Code for long arrows', value: '111' },
  { kind: 'int', name: 'btn_Subwindow', value: '0' },
  { kind: 'int', name: 'btn_corner', value: 'Left upper chart corner' },
  { kind: 'text', name: 'btn_text', value: 'channel' },
  { kind: 'text', name: 'btn_Font', value: 'Arial' },
  { kind: 'int', name: 'btn_FontSize', value: '8' },
  { kind: 'color', name: 'btn_text_ON_color', value: 'Lime', swatch: 'bg-[#00ff00]' },
  { kind: 'color', name: 'btn_text_OFF_color', value: 'Red', swatch: 'bg-[#ff0000]' },
  { kind: 'color', name: 'btn_background_color', value: 'DimGray', swatch: 'bg-[#696969]' },
  { kind: 'color', name: 'btn_border_color', value: 'Black', swatch: 'bg-black' },
  { kind: 'int', name: 'button_x', value: '1' },
  { kind: 'int', name: 'button_y', value: '100' },
  { kind: 'int', name: 'btn_Width', value: '60' },
];

const kindFill: Record<Kind, [string, string]> = {
  int: ['#8fc0ea', '#4a80b8'],
  bool: ['#8ee88e', '#3f9a4c'],
  color: ['#ffffff', '#707070'],
  text: ['#e8dc7c', '#a8973a'],
};

function KindIcon({ kind }: { kind: Kind }) {
  const [fill, line] = kindFill[kind];
  return (
    <svg viewBox="0 0 16 16" className="block w-4 h-4 shrink-0">
      <path d="M0.5 15.5V1.5L1.5 0.5H12L15.5 4V15.5L13.5 14L11.5 15.5L9.5 14L7.5 15.5L5.5 14L3.5 15.5L2 14Z" fill={fill} stroke={line} />
      <path d="M12 0.5V4H15.5" fill="#fff" stroke={line} />
      {kind === 'int' && <text x="8" y="11" textAnchor="middle" fontSize="7" fontWeight="700" fill="#123a66" fontFamily="Liberation Sans, sans-serif">123</text>}
      {kind === 'text' && <text x="8" y="11" textAnchor="middle" fontSize="9" fontWeight="700" fill="#5a4c08" fontFamily="Liberation Sans, sans-serif">ab</text>}
      {kind === 'bool' && <path d="M3 10.5L8 5.5M8 10.5H12.5" stroke="#106020" strokeWidth="1.5" />}
      {kind === 'color' && <><rect x="3" y="6" width="10" height="6" fill="#ff8c00" /><rect x="6" y="7" width="5" height="4" fill="#ffe000" /></>}
    </svg>
  );
}

const dialogButton = 'rounded border border-[#d0d0d0] border-b-[#b8b8b8] bg-[#fdfdfd] text-xs text-black h-7';

const tabs: [string, string][] = [
  ['关于', 'h-[22px] w-12 pl-[5px] bg-[#f3f3f3]'],
  ['常用', 'h-[22px] w-[47px] pl-[5px] bg-[#f3f3f3]'],
  ['输入参数', 'h-[25px] w-[63px] pl-[6px] pb-1 bg-[#f9f9f9]'],
  ['颜色', 'h-[22px] w-[46px] pl-[3px] bg-[#f3f3f3]'],
  ['应用范围', 'h-[22px] w-[58px] pl-[5px] bg-[#f3f3f3]'],
];

function IndicatorDialog() {
  return (
    <div role="dialog" aria-label="Custom Indicator" className="absolute left-[400px] top-[74px] w-[702px] h-[826px] flex flex-col rounded-lg border border-[#8a8a8a] bg-[#f0f0f0] overflow-hidden shadow-[0_6px_20px_rgba(0,0,0,0.6)]">
      <div className="flex items-center h-[29px] pl-[7px] pr-4 bg-white text-[#999999] text-[13px] shrink-0">
        <h2 className="flex-1">Custom Indicator - channel(2x + BT)</h2>
        <button aria-label="Help" className="w-6 text-sm mr-6">?</button>
        <button aria-label="Close"><X className="w-4 h-4" strokeWidth={1} /></button>
      </div>

      <div role="tablist" className="flex items-end h-[34px] pl-2 text-xs text-black text-left shrink-0">
        {tabs.map(([t, look], i) => (
          <button key={t} role="tab" aria-selected={i === 2} className={`text-left whitespace-nowrap border border-b-0 border-[#e5e5e5] ${look}`}>
            {t}
          </button>
        ))}
      </div>

      <div className="flex mx-[6px] h-[728px] pt-[9px] pl-[11px] pr-[10px] pb-[9px] gap-[9px] border border-[#e5e5e5] bg-[#f9f9f9] shrink-0">
        <div className="flex w-[536px] border border-[#828790] bg-white overflow-hidden p-px">
          <div className="flex-1 overflow-hidden">
            <table className="w-full table-fixed border-collapse text-xs text-black text-left whitespace-pre">
              <thead>
                <tr className="h-6">
                  <th className="w-64 pl-[6px] font-normal border-r border-[#e5e5e5]">变量</th>
                  <th className="pl-[6px] font-normal border-r border-[#e5e5e5]">赋值</th>
                </tr>
              </thead>
              <tbody>
                {params.map((p, i) => (
                  <tr key={p.name} className={`h-[21px] border-b border-[#c8c8c8] ${i === 18 ? 'bg-[#e0f0fe]' : i % 2 ? 'bg-[#ebebeb]' : 'bg-white'}`}>
                    <td className="p-0 border-r border-[#c0c0c0]">
                      <span className="flex items-center gap-1 pl-px h-5"><KindIcon kind={p.kind} />{p.name}</span>
                    </td>
                    <td className="p-0">
                      <span className="flex items-center gap-[3px] pl-[3px] h-5">
                        {p.swatch && <i className={`w-[14px] h-[14px] border border-[#9a9a9a] ${p.swatch}`} />}
                        {p.value}
                      </span>
                    </td>
                  </tr>
                ))}
              </tbody>
            </table>
          </div>
          <div className="w-[17px] bg-[#f0f0f0] flex justify-center pt-[17px]">
            <span className="w-[2px] h-[652px] bg-[#858585]" />
          </div>
        </div>
        <div className="flex-1 flex flex-col justify-end gap-[15px] pb-[2px]">
          <button className={dialogButton}>加载(L)</button>
          <button className={dialogButton}>保存(S)</button>
        </div>
      </div>

      <div className="relative -mt-1 flex justify-end gap-2 pr-[9px]">
        <button className={`${dialogButton} w-[86px]`}>确定</button>
        <button className={`${dialogButton} w-[86px]`}>取消</button>
        <button className={`${dialogButton} w-[86px]`}>重设</button>
      </div>
      <svg viewBox="0 0 8 8" className="absolute right-[3px] bottom-[3px] w-2 h-2" fill="#b8b8b8">
        <path d="M6 0h2v2H6zM3 3h2v2H3zM6 3h2v2H6zM0 6h2v2H0zM3 6h2v2H3zM6 6h2v2H6z" />
      </svg>
    </div>
  );
}

/* ---------- toolbars ---------- */

const Sep = () => <span className="w-px h-5 bg-[#a8a8a8] shrink-0" />;
const Grip = () => <span className="w-[3px] h-5 border-x border-dotted border-[#888] shrink-0" />;
const Caret = () => (
  <svg viewBox="0 0 6 4" className="w-[6px] h-1 shrink-0"><path d="M0 0h6l-3 3.5z" /></svg>
);

const Glyph = ({ children }: { children: React.ReactNode }) => (
  <svg viewBox="0 0 18 18" className="w-[18px] h-[18px] shrink-0" fill="none" strokeWidth="1.3">{children}</svg>
);

function Tool({ name, pressed, children }: { name: string; pressed?: boolean; children: React.ReactNode }) {
  return (
    <button aria-label={name} className={`flex items-center justify-center shrink-0 h-[23px] w-[25px] ${pressed ? 'border border-[#b0b0b0] bg-[#f8f8f8]' : ''}`}>
      <Glyph>{children}</Glyph>
    </button>
  );
}

const plus = <path d="M11 11V8h3v3h3v3h-3v3h-3v-3h-3v-3z" fill="#22cc22" stroke="#0a7a0a" strokeWidth="1" />;
const axes = <path d="M5 2V15M2 14H16M3.5 4L5 2L6.5 4M14 12.5L16 14L14 15.5" stroke="#555" />;

function MainToolbar() {
  return (
    <div className="flex items-center h-[27px] text-xs text-black">
      <div className="flex items-center h-full pt-px border-r border-b border-[#a8a8a8] pr-[7px]">
        <Grip />
        <div className="flex items-center">
          <Tool name="New chart"><path d="M2 2h11v10H2z" fill="#fff" stroke="#3f7ab5" /><path d="M4 5v4M4 7h7" stroke="#3f7ab5" />{plus}</Tool>
          <span className="w-[14px] flex justify-center"><Caret /></span>
          <Tool name="Profiles"><path d="M1 2h12v9H1z" fill="#fff" stroke="#3f7ab5" /><path d="M5 7h12v9H5z" fill="#dcecfb" stroke="#3f7ab5" /></Tool>
          <span className="w-[12px] flex justify-center"><Caret /></span>
        </div>
        <span className="w-1" /><Sep />
        <div className="flex items-center gap-[3px] pl-1 pr-1">
          <Tool name="Market watch"><path d="M1 1h16v16H1z" fill="#f5faff" stroke="#5b97cf" /><path d="M6 3l3 4H7v3H5V7H3z" fill="#1a9a1a" /><path d="M12 14l-3 -4h2V7h2v3h2z" fill="#e06010" /></Tool>
          <Tool name="Data window"><circle cx="9" cy="9" r="5.5" stroke="#666" /><path d="M9 1v6M9 11v6M1 9h6M11 9h6" stroke="#666" /></Tool>
          <Tool name="Navigator"><path d="M1 2h5l1 2h6v6H1z" fill="#f7dc7c" stroke="#c79a20" /><path d="M12 6l1.6 3.5 3.9.4-3 2.5 1 4-3.5-2-3.5 2 1-4-3-2.5 3.9-.4z" fill="#ffd23c" stroke="#c88a10" strokeWidth="1" /></Tool>
          <Tool name="Terminal"><path d="M1 2h16v14H1z" fill="#fff" stroke="#2f6fb0" strokeWidth="1.6" /><path d="M2 3h3v12H2z" fill="#3f86c8" /><path d="M7 6h8M7 9h8M7 12h8" stroke="#b9d2ea" /></Tool>
          <Tool name="Strategy tester"><path d="M2 2h11v12H2z" fill="#e8f1f8" stroke="#7c9ab5" /><circle cx="10" cy="9" r="4" fill="#cfe6f8" stroke="#4a80b0" /><path d="M13 12l4 5" stroke="#c99420" strokeWidth="2.5" /></Tool>
        </div>
        <Sep />
        <button className="flex items-center gap-1 pl-2 mr-[6px]">
          <Glyph><path d="M2 1h9l3 3v12H2z" fill="#fff" stroke="#666" /><path d="M4 5h6M4 8h6M4 11h4" stroke="#888" />{plus}</Glyph>新订单
        </button>
        <div className="flex items-center gap-[3px]">
          <Tool name="MetaEditor"><path d="M1 9L6 2L17 10L11 16Z" fill="#f0b93c" stroke="#a87410" /><path d="M1 9L11 14L17 10" stroke="#a87410" /></Tool>
          <Tool name="Cloud"><path d="M4 1h10v8H4z" fill="#3a9be8" stroke="#1a6ab0" /><path d="M3 16c-3-4 1-6 3-4c1-4 7-3 7 0c4-1 5 4 2 4z" fill="#eef3f8" stroke="#8aa0b8" /></Tool>
          <Tool name="Signals"><circle cx="9" cy="9" r="7.5" stroke="#9dbccf" /><circle cx="9" cy="9" r="4.5" stroke="#5ba0c8" /><circle cx="9" cy="9" r="2" fill="#2a9a50" /><path d="M9 10v7c5 0 7-3 7-7" stroke="#3aa860" strokeWidth="2" /></Tool>
        </div>
        <button className="flex items-center gap-[3px] pl-[5px]">
          <Glyph><path d="M2 8h14l-5 7H7z" fill="#f2c94c" stroke="#b08a18" /><path d="M1 7c2-6 13-6 15 0z" fill="#5aaade" stroke="#2a78b0" /><circle cx="13" cy="13" r="4.5" fill="#e02a10" /><path d="M11.5 11.5h3v3h-3z" fill="#fff" /></Glyph>自动交易
        </button>
      </div>
      <div className="flex items-center h-full pt-px border-r border-b border-[#a8a8a8] pl-[3px] pr-[7px]">
        <Grip />
        <div className="flex items-center gap-[3px] px-[3px]">
          <Tool name="Bar chart">{axes}<path d="M9 11V5M12 9V3M8 10h1M12 4h1" stroke="#1a9a1a" /></Tool>
          <Tool name="Candlesticks" pressed>{axes}<path d="M10 1V12" stroke="#1a9a1a" /><path d="M8.5 3h4v7h-4z" fill="#22bb22" /></Tool>
          <Tool name="Line chart">{axes}<path d="M4 11C8 3 10 4 15 10" stroke="#1a9a1a" /></Tool>
        </div>
        <Sep />
        <div className="flex items-center gap-[3px] pl-[3px] pr-[5px]">
          <Tool name="Zoom in"><circle cx="7" cy="7" r="5.5" fill="#dff0ff" stroke="#3a7cc0" /><path d="M4 7h6M7 4v6" stroke="#2060b0" /><path d="M11 11l5 6" stroke="#c99420" strokeWidth="2.5" /></Tool>
          <Tool name="Zoom out"><circle cx="7" cy="7" r="5.5" fill="#dff0ff" stroke="#3a7cc0" /><path d="M4 7h6" stroke="#2060b0" /><path d="M11 11l5 6" stroke="#c99420" strokeWidth="2.5" /></Tool>
          <Tool name="Tile windows"><path d="M1 1h8v8H1zM9 9h8v8H9z" fill="#4bb02a" /><path d="M9 1h8v8H9zM1 9h8v8H1z" fill="#2a56c8" /><path d="M2 4h5v3H2zM11 4h5v3h-5zM2 13h5v3H2zM11 13h5v3h-5z" fill="#e8f2ff" /></Tool>
        </div>
        <Sep />
        <div className="flex items-center gap-[3px] px-1">
          <Tool name="Auto scroll">{axes}<path d="M9 5l5 4l-5 4z" fill="#22aa22" /></Tool>
          <Tool name="Chart shift">{axes}<path d="M10 3v10" stroke="#1f6fc0" /><path d="M16 8h-5M13 6l-2 2l2 2" stroke="#c04010" /></Tool>
        </div>
        <Sep />
        <div className="flex items-center pl-1">
          <Tool name="Indicators"><path d="M2 1h9l3 3v12H2z" fill="#fff" stroke="#666" /><path d="M5 10c1-6 2-6 4-6" stroke="#888" />{plus}</Tool>
          <span className="w-[14px] flex justify-center"><Caret /></span>
          <Tool name="Periods"><circle cx="9" cy="9" r="7" fill="#fff" stroke="#1f5fb0" strokeWidth="2.5" /><path d="M9 5v4h3" stroke="#333" /></Tool>
          <span className="w-[14px] flex justify-center"><Caret /></span>
          <Tool name="Templates"><path d="M1 2h16v14H1z" fill="#fff" stroke="#3f7ab5" /><path d="M1 2h16v3H1z" fill="#5b97cf" /><path d="M3 9l4-1l3 1l5-2" stroke="#a03020" /><path d="M3 14l3-2l3 1l5-2" stroke="#1a9a1a" /></Tool>
          <Caret />
        </div>
      </div>
      <div className="flex-1" />
      <button aria-label="Search"><Search className="w-[15px] h-[15px] text-[#2a5fd0] -scale-x-100" strokeWidth={2} /></button>
      <button aria-label="Notifications" className="relative ml-3 mr-1 w-6 h-6">
        <svg viewBox="0 0 24 24"><path d="M1 16c0-8 14-8 14 0c0 4-5 5-8 5l-2 3v-3c-2 0-4-2-4-5z" fill="#dcdcdc" stroke="#a0a0a0" /><circle cx="15" cy="10" r="8" fill="#e03420" /></svg>
        <span className="absolute right-[6px] top-0 text-white text-xs leading-5">6</span>
      </button>
    </div>
  );
}

function LineToolbar() {
  return (
    <div className="flex items-center h-[27px] pt-[2px] border-b-2 border-[#a0a0a0]">
      <Grip />
      <div className="flex items-center pl-px gap-[3px]">
        <Tool name="Cursor" pressed><path d="M6 2v13l3-3l2 5l2-1l-2-5h4z" fill="#444" /></Tool>
        <Tool name="Crosshair"><path d="M9 2v5M9 11v5M2 9h5M11 9h5" stroke="#555" /></Tool>
      </div>
      <span className="w-[5px]" /><Sep />
      <div className="flex items-center gap-[3px] pl-1 pr-px">
        <Tool name="Vertical line"><path d="M9 3v12" stroke="#555" /></Tool>
        <Tool name="Horizontal line"><path d="M3 9h12" stroke="#555" /></Tool>
        <Tool name="Trendline"><path d="M3 15L15 3" stroke="#555" /></Tool>
        <Tool name="Channel"><path d="M1 11L13 1M1 15L14 5M4 7v7M8 4v8M11 3v6" stroke="#555" /><path d="M17 12h-3v5h3M14 14.5h3" stroke="#333" /></Tool>
        <Tool name="Fibonacci"><path d="M2 2h14M2 6h14M2 10h10M2 14h10" stroke="#555" strokeDasharray="2 1" /><path d="M17 11h-3v6M14 14h3" stroke="#333" /></Tool>
        <Tool name="Text"><path d="M5 15L9 4L13 15M6.5 11H11.5" stroke="#555" strokeWidth="1.8" /></Tool>
        <Tool name="Label"><path d="M3 3h12v13H3z" stroke="#777" strokeDasharray="2 1" /><path d="M5 6h8M9 6v8" stroke="#444" strokeWidth="1.8" /></Tool>
        <Tool name="Arrows"><path d="M2 5l3-3l3 3l-3 3zM9 13l3-3l3 3l-3 3z" fill="#555" /><path d="M4 10l3 3l6-8" stroke="#555" /></Tool>
        <Caret />
      </div>
      <span className="w-1 h-full border-r border-[#a8a8a8]" />
      <div className="flex items-center gap-[3px] pl-[3px] text-[10px] text-[#333] font-['DejaVu_Sans_Condensed','DejaVu_Sans',sans-serif]">
        <Grip />
        <button className="w-[25px] h-[23px] border border-[#b0b0b0] bg-[#f8f8f8]">M1</button>
        <button className="w-[25px] h-[23px]">M5</button>
        <button className="w-[25px] h-[23px]">M15</button>
      </div>
    </div>
  );
}

function Header() {
  const menus = ['文件(F)', '显示(V)', '插入(I)', '图表(C)', '工具(T)', '窗口(W)', '帮助(H)'];
  return (
    <header className="bg-[#f0f0f0]">
      <div className="flex items-center h-[23px] bg-white text-[#8f8f8f] pr-4">
        <svg viewBox="0 0 15 15" className="w-[15px] h-[15px]"><rect width="15" height="15" fill="#0c1420" /><path d="M2 10l4-4l2 2l5-3M2 12h11" stroke="#c8a41a" fill="none" /></svg>
        <h1 className="flex-1 pl-[5px] text-[13px]">19113546: Exness-Real9 - Exness Technologies Ltd - [USDJPYm,M1]</h1>
        <div className="flex items-center gap-8">
          <button aria-label="Minimize"><Minus className="w-[14px] h-[14px]" strokeWidth={1.5} /></button>
          <button aria-label="Restore"><Copy className="w-3 h-3 -scale-x-100 rotate-180" strokeWidth={2} /></button>
          <button aria-label="Close"><X className="w-[14px] h-[14px]" strokeWidth={1.5} /></button>
        </div>
      </div>
      <nav className="flex items-center h-[21px] pl-[2px] gap-[19px] text-xs text-[#999999] border-b border-[#a0a0a0]">
        <svg viewBox="0 0 14 14" className="w-[14px] h-[14px] -mr-[11px]" fill="none" stroke="#4a90d9"><path d="M.5.5h9v8h-9z" /><path d="M3.5 5.5h10v8h-10z" fill="#fff" /><path d="M5 10l2-2l2 3l3-3" /></svg>
        {menus.map(m => (
          <a key={m} href="#">{m}</a>
        ))}
        <div className="flex-1" />
        <div className="flex gap-px text-[#8fa0b0]">
          <button aria-label="Minimize chart" className="w-[18px] h-[18px] flex items-center justify-center bg-[#e6e6e6]"><Minus className="w-2 h-2 mt-1" strokeWidth={4} /></button>
          <button aria-label="Restore chart" className="w-[18px] h-[18px] flex items-center justify-center bg-[#e6e6e6]"><Copy className="w-2 h-2 -scale-x-100" strokeWidth={3} /></button>
          <button aria-label="Close chart" className="w-[18px] h-[18px] flex items-center justify-center bg-[#e6e6e6]"><X className="w-[10px] h-[10px]" strokeWidth={4} /></button>
        </div>
      </nav>
      <MainToolbar />
      <LineToolbar />
    </header>
  );
}

function StatusBar() {
  const cell = 'h-5 flex items-center border-l border-[#a8a8a8] pl-[5px]';
  return (
    <footer className="relative flex items-center h-[25px] bg-[#f0f0f0] border-t border-white border-b border-b-[#202020] text-xs text-black whitespace-nowrap">
      <p className="flex-1">寻求帮助,请按F1键</p>
      <span className={`${cell} w-[135px]`}>Default</span>
      <span className={`${cell} w-[117px]`}>2023.05.18 13:02</span>
      <span className={`${cell} w-[82px]`}>O: 138.240</span>
      <span className={`${cell} w-[81px]`}>H: 138.240</span>
      <span className={`${cell} w-[78px]`}>L: 138.196</span>
      <span className={`${cell} w-[80px]`}>C: 138.222</span>
      <span className={`${cell} w-[78px]`}>V: 102</span>
      <span className={`${cell} w-[144px] gap-[3px]`}>
        <svg viewBox="0 0 24 14" className="w-6 h-[14px]">
          {[0, 1, 2, 3, 4, 5, 6, 7].map(i => (
            <g key={i}><path d={`M${i * 3 + 1} 0V${11 - i}`} stroke="#6a7a10" strokeWidth="2" /><path d={`M${i * 3 + 1} ${12 - i}V14`} stroke="#0f4a7a" strokeWidth="2" /></g>
          ))}
        </svg>
        4356
      </span>
      <div className="absolute right-[2px] bottom-0 h-7 w-[87px] bg-white flex items-center justify-between pl-1 pr-1">
        <svg viewBox="0 0 22 18" className="w-[22px] h-[18px]" fill="#fff" stroke="#33bfee" strokeWidth="1.3"><path d="M3 16L1 4H6L8 6" /><path d="M3 16V2H9L11 5H21V16Z" /></svg>
        <svg viewBox="0 0 18 22" className="w-[18px] h-[22px]" fill="#fff" stroke="#111" strokeWidth="1.5"><path d="M1 3H17V21H1Z" /><path d="M4 6H14V18H4ZM6 4L9 1L12 4V6H6Z" /></svg>
        <svg viewBox="0 0 20 20" className="w-5 h-5" fill="none" stroke="#111" strokeWidth="1.2"><circle cx="10" cy="10" r="8.5" /><path d="M5 5L15 15M15 5L5 15" /></svg>
      </div>
    </footer>
  );
}

export default function App() {
  return (
    <div className="relative min-h-screen flex flex-col overflow-hidden bg-[#151e28] font-['Noto_Sans','Noto_Sans_CJK_SC',sans-serif]">
      <Header />
      <main className="relative after:absolute after:inset-y-0 after:right-0 after:w-px after:bg-[#e0e0e0] after:content-['']">
        <MainChart />
        <OscillatorPane
          top={635}
          height={115}
          levels={[688, 698, 707]}
          fast={rsiFast}
          slow={rsiSlow}
          envelope={rsiBands}
          scale={[[647, '0'], [692, '55'], [702, '50'], [711, '45'], [746, '0']]}
          signals={[[668, 'M1 WAIT', '#808080'], [732, 'M1 UP TREND', LIME]]}
        />
        <OscillatorPane
          top={750}
          height={128}
          levels={[794, 811, 817, 823, 840]}
          fast={stoFast}
          slow={stoSlow}
          envelope={stoBands}
          scale={[[762, '0'], [798, '68'], [815, '55'], [821, '50'], [827, '45'], [844, '32'], [874, '0']]}
          signals={[[784, 'M1 DOWN TREND', RED], [861, 'M1 DOWN TREND', RED]]}
        />
        <MacdPane />
        <TimeScale />
        <ChartButtons />
        <Palette />
        <p className="absolute right-[2px] bottom-1 text-xs font-semibold text-white bg-[#151e28]">1916, 1033</p>
      </main>
      <IndicatorDialog />
      <StatusBar />
    </div>
  );
}
